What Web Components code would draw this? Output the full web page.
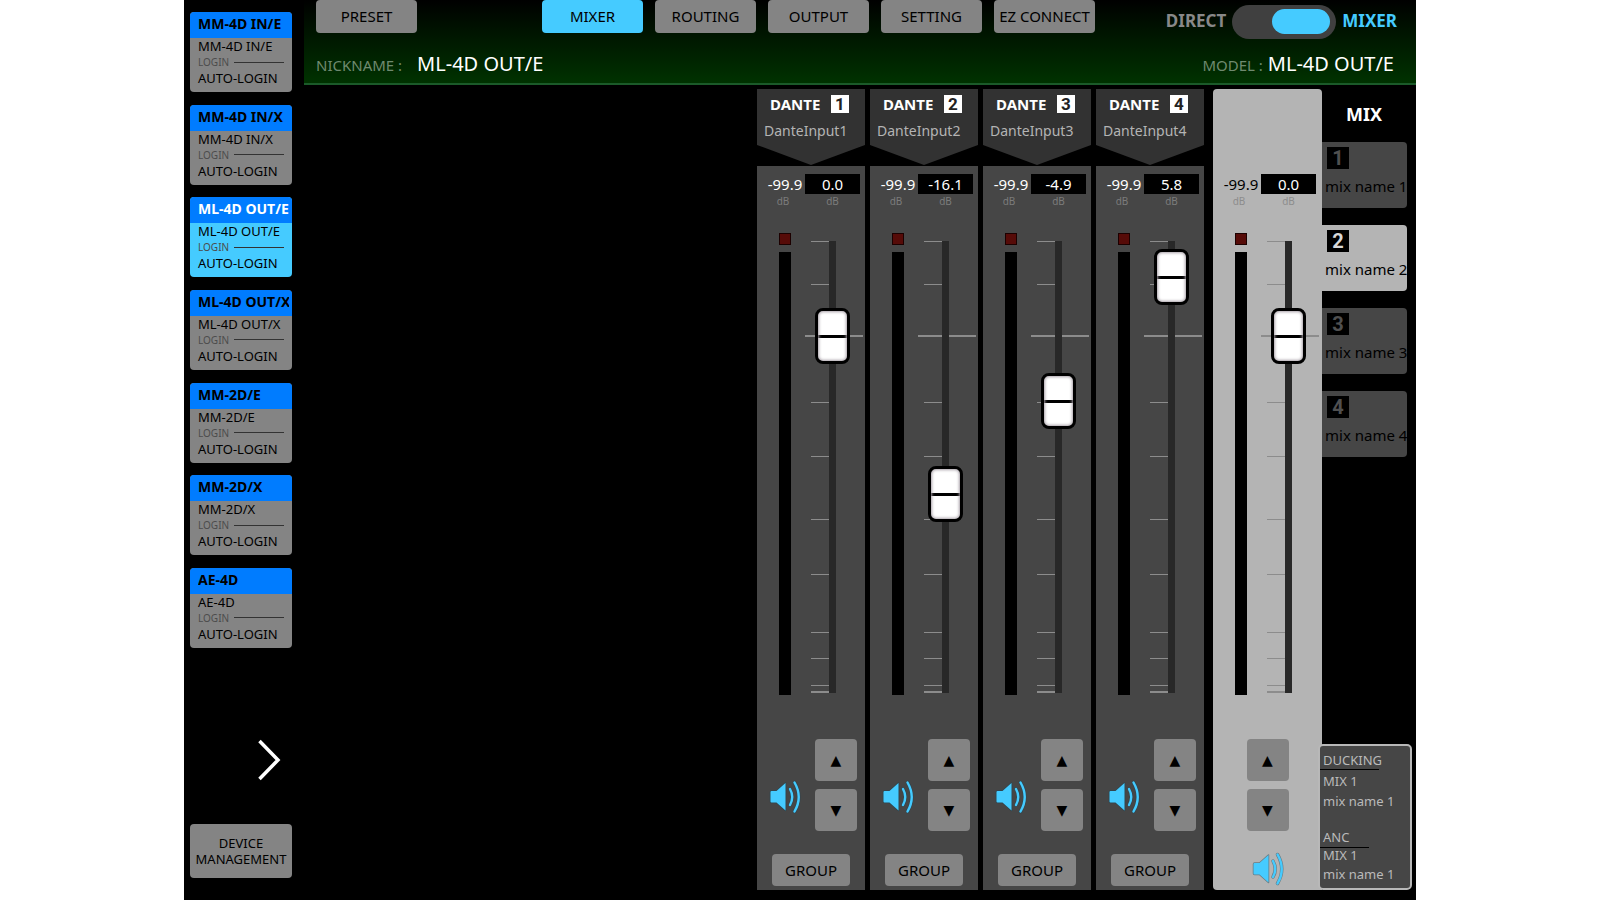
<!DOCTYPE html>
<html lang="en">
<head>
<meta charset="utf-8">
<meta name="viewport" content="width=device-width, initial-scale=1">
<title>ML-4D OUT/E – Mixer</title>
<style>
  body { margin: 0; background: #fff; font-family: "Noto Sans", "Open Sans", sans-serif; }
</style>
</head>
<body>
<mixer-app></mixer-app>

<script>
const BUTTON = `
  button { font: inherit; color: #000; background: #848484; border: 0; border-radius: 4px;
           padding: 0; cursor: pointer; white-space: nowrap; }
  button:focus-visible, input:focus-visible { outline: 2px solid #fff; }
`;

class BaseElement extends HTMLElement {
  connectedCallback() {
    if (this.shadowRoot) return;
    const template = document.createElement('template');
    template.innerHTML = this.render();
    this.attachShadow({ mode: 'open' }).append(template.content.cloneNode(true));
  }
  attr(name) { return this.getAttribute(name) || ''; }
  render() { return ''; }
}

/* Device tile in the side list */
class DeviceCard extends BaseElement {
  render() {
    return `
    <style>
      :host { display: block; }
      ${BUTTON}
      button { display: block; width: 100%; height: 80px; overflow: hidden; text-align: left; }
      .title { display: block; height: 26px; padding: 0 3px 0 8px; background: #007cff; }
      .title b { display: block; font-size: 14px; line-height: 24px; overflow: hidden; }
      .body { display: flex; flex-direction: column; gap: 2px; height: 54px; padding: 0 8px;
              font-size: 13px; line-height: 16px; }
      .login { display: flex; align-items: center; gap: 5px; font-size: 10px; line-height: 12px; color: #4c4c4c; }
      .login i { flex: 1; height: 1px; background: #333; }
      :host([selected]) button { background: #45cbff; }
      :host([selected]) .title { color: #fff; }
    </style>
    <button type="button">
      <span class="title"><b>${this.attr('name')}</b></span>
      <span class="body">
        <span>${this.attr('name')}</span>
        <span class="login">LOGIN <i></i></span>
        <span>AUTO-LOGIN</span>
      </span>
    </button>`;
  }
}
customElements.define('device-card', DeviceCard);

class DeviceSidebar extends BaseElement {
  render() {
    return `
    <style>
      :host { display: flex; flex-direction: column; box-sizing: border-box; width: 120px;
              padding: 12px 12px 22px 6px; }
      ${BUTTON}
      nav { display: flex; flex-direction: column; justify-content: space-between; height: 636px; }
      .next { margin: auto 10px 42px auto; width: 26px; height: 44px; background: none; }
      svg { display: block; }
      .manage { height: 54px; font-size: 13px; line-height: 16px; }
    </style>
    <nav aria-label="Devices"><slot></slot></nav>
    <button class="next" type="button" aria-label="Next page">
      <svg width="26" height="44" viewBox="0 0 26 44" fill="none" stroke="#fff" stroke-width="3.500"><path d="M3.500 3L22 22 3.500 41"/></svg>
    </button>
    <button class="manage" type="button">DEVICE<br>MANAGEMENT</button>`;
  }
}
customElements.define('device-sidebar', DeviceSidebar);

class TabButton extends BaseElement {
  render() {
    return `
    <style>
      :host { display: block; }
      ${BUTTON}
      button { width: 100%; height: 33px; font-size: 15px; line-height: 21px; }
      :host([selected]) button { background: #45cbff; }
    </style>
    <button type="button"><slot></slot></button>`;
  }
}
customElements.define('tab-button', TabButton);

/* DIRECT / MIXER switch */
class ModeSwitch extends BaseElement {
  render() {
    return `
    <style>
      :host { display: block; font-size: 17px; font-weight: 700; line-height: 20px; color: #888; }
      label { display: flex; align-items: center; gap: 6px; }
      span { padding-bottom: 3px; }
      .on { color: #45cbff; }
      input { appearance: none; display: flex; justify-content: flex-start; box-sizing: border-box; margin: 0;
              width: 104px; height: 34px; padding: 4px 6px; border-radius: 17px; background: #404040; }
      input::before { content: ""; width: 58px; height: 25px; border-radius: 13px; background: #888; }
      input:checked { justify-content: flex-end; }
      input:checked::before { background: #45cbff; }
    </style>
    <label><span>DIRECT</span><input type="checkbox" role="switch" checked><span class="on">MIXER</span></label>`;
  }
}
customElements.define('mode-switch', ModeSwitch);

class AppHeader extends BaseElement {
  render() {
    return `
    <style>
      :host { display: block; border-bottom: 2px solid #1b5a29; padding: 0 19px 4px 12px;
              background: linear-gradient(#000, #001500 40%, #003200); }
      .top { display: flex; align-items: flex-start; justify-content: space-between; height: 50px; }
      nav { display: grid; grid-template-columns: repeat(7, 101px); gap: 12px; }
      tab-button:nth-child(2) { grid-column: 3; }
      mode-switch { margin-top: 5px; }
      .names { display: flex; justify-content: space-between; padding-right: 3px; line-height: 28px; }
      .names div { display: flex; align-items: baseline; gap: 5px; }
      .names .nick { gap: 15px; }
      .names span { font-size: 15px; color: #6f8a6f; }
      .names output { font-size: 20px; color: #fff; }
    </style>
    <div class="top">
      <nav aria-label="Pages">
        <tab-button>PRESET</tab-button>
        <tab-button selected>MIXER</tab-button>
        <tab-button>ROUTING</tab-button>
        <tab-button>OUTPUT</tab-button>
        <tab-button>SETTING</tab-button>
        <tab-button>EZ CONNECT</tab-button>
      </nav>
      <mode-switch></mode-switch>
    </div>
    <div class="names">
      <div class="nick"><span>NICKNAME :</span><output>${this.attr('nickname')}</output></div>
      <div><span>MODEL :</span><output>${this.attr('model')}</output></div>
    </div>`;
  }
}
customElements.define('app-header', AppHeader);

/* Level meter, gain scale and fader knob */
class LevelFader extends BaseElement {
  render() {
    const ticks = [0, 43, 161, 215, 278, 333, 391, 417, 444]
      .map(y => `<rect x="6" y="${y}" width="18" height="1"/>`).join('');
    return `
    <style>
      :host { display: block; }
      .grid { display: grid; grid-template-columns: 40px 55px; padding: 0 5px 0 8px; justify-items: center; }
      .peak { font-size: 15px; line-height: 20px; color: var(--level-color, #fff); }
      .gain { justify-self: stretch; text-align: center; font-size: 15px; line-height: 20px; background: #000; color: #fff; }
      small { font-size: 10px; line-height: 14px; color: var(--unit-color, #7c7c7c); }
      .peak-unit { padding-right: 4px; }
      .travel { margin-top: 5px; }
      .meter { display: grid; grid-template-rows: 12px 443px; gap: 7px; width: 12px; margin: 20px 1px 0 0; align-self: start; }
      .led { box-sizing: border-box; border: 1px solid #1c0000; background: #560b08; }
      .bar { background: #000; }
      .fader { display: grid; justify-self: stretch; align-items: center; }
      .fader > * { grid-area: 1 / 1; }
      svg { display: block; overflow: visible; }
      input { appearance: none; writing-mode: vertical-lr; direction: rtl; justify-self: center;
              width: 35px; height: 508px; margin: 0 3px 0 0; background: none; }
      input::-webkit-slider-runnable-track { background: none; }
      input::-webkit-slider-thumb {
        appearance: none; box-sizing: border-box; width: 35px; height: 56px; border: 3px solid #000; border-radius: 8px;
        background: linear-gradient(transparent 24px, #000 24px, #000 27px, transparent 27px), #fff;
        box-shadow: inset 0 0 3px 1px #a8a0a8; }
    </style>
    <div class="grid">
      <output class="peak">-99.9</output><output class="gain">${this.attr('gain')}</output>
      <small class="peak-unit">dB</small><small>dB</small>
    </div>
    <div class="grid travel">
      <div class="meter"><div class="led"></div><div class="bar"></div></div>
      <div class="fader">
        <svg width="58" height="452" viewBox="0 0 58 452" fill="#8c8c8c" shape-rendering="crispEdges" aria-hidden="true">
          ${ticks}
          <rect x="6" y="450" width="18" height="2"/>
          <rect x="0" y="94" width="58" height="2"/>
          <rect x="24" y="0" width="7" height="452" fill="#282828"/>
        </svg>
        <input type="range" min="0" max="452" value="${this.attr('travel')}" aria-label="${this.attr('label')} level">
      </div>
    </div>`;
  }
}
customElements.define('level-fader', LevelFader);

class NudgeButtons extends BaseElement {
  render() {
    return `
    <style>
      :host { display: grid; gap: 8px; width: 42px; }
      ${BUTTON}
      button { height: 42px; font: 14px/20px "DejaVu Sans", sans-serif; }
    </style>
    <button type="button" aria-label="Level up">▲</button>
    <button type="button" aria-label="Level down">▼</button>`;
  }
}
customElements.define('nudge-buttons', NudgeButtons);

class SpeakerToggle extends BaseElement {
  render() {
    return `
    <style>
      :host { display: block; }
      button { display: block; padding: 0; border: 0; background: none; cursor: pointer; }
      svg { display: block; overflow: visible; }
      .edge { stroke: var(--speaker-edge, #2f4650); }
    </style>
    <button type="button" aria-label="Mute" aria-pressed="false">
      <svg width="30" height="32" viewBox="0 0 30 32">
        <g class="edge" fill="none" stroke-linecap="round" stroke-linejoin="round">
          <path stroke-width="1.500" d="M.5 11Q.5 10 1.500 10H6.500L15.500 2V29.500L6.500 21.500H1.500Q.5 21.500.5 20.500Z"/>
          <path stroke-width="3.500" d="M20 8Q24.500 16 20 24M24.500 1.500Q33 16 24.500 30.500"/>
        </g>
        <path fill="#45cbff" d="M.5 11Q.5 10 1.500 10H6.500L15.500 2V29.500L6.500 21.500H1.500Q.5 21.500.5 20.500Z"/>
        <path fill="none" stroke="#45cbff" stroke-width="2.400" stroke-linecap="round" d="M20 8Q24.500 16 20 24M24.500 1.500Q33 16 24.500 30.500"/>
      </svg>
    </button>`;
  }
}
customElements.define('speaker-toggle', SpeakerToggle);

class ChannelStrip extends BaseElement {
  render() {
    const n = this.attr('number');
    return `
    <style>
      :host { display: flex; flex-direction: column; gap: 1px; width: 108px; }
      ${BUTTON}
      header { box-sizing: border-box; height: 76px; padding-top: 6px; background: #323232; color: #fff;
               clip-path: polygon(0 0, 100% 0, 100% 56px, 50% 100%, 0 56px); }
      .source { display: flex; justify-content: space-between; padding: 0 16px 0 13px;
                font-size: 15px; font-weight: 700; line-height: 18px; }
      .source b { width: 18px; height: 18px; text-align: center; background: #fff; color: #222;
                  font: 700 17px/18px Roboto, sans-serif; }
      .name { margin-top: 8px; padding-left: 7px; font-size: 14px; line-height: 20px; color: #b4b4b4; }
      section { padding: 8px 0 4px; background: #464646; }
      .controls { display: flex; justify-content: space-between; align-items: flex-end; padding: 0 8px 0 13px; margin-top: 18px; }
      speaker-toggle { margin-bottom: 18px; }
      .group { display: block; width: 78px; height: 32px; margin: 23px auto 0; font-size: 15px; line-height: 20px; }
    </style>
    <header>
      <div class="source">DANTE <b>${n}</b></div>
      <div class="name">DanteInput${n}</div>
    </header>
    <section>
      <level-fader gain="${this.attr('gain')}" travel="${this.attr('travel')}" label="Dante ${n}"></level-fader>
      <div class="controls"><speaker-toggle></speaker-toggle><nudge-buttons></nudge-buttons></div>
      <button class="group" type="button">GROUP</button>
    </section>`;
  }
}
customElements.define('channel-strip', ChannelStrip);

class MasterStrip extends BaseElement {
  render() {
    return `
    <style>
      :host { display: flex; flex-direction: column; align-items: center; box-sizing: border-box; width: 109px; margin-left: 4px;
              padding-top: 85px; background: #b4b4b4; border-radius: 4px 4px 0 4px;
              --level-color: #000; --unit-color: #8c8c8c; --speaker-edge: #6a7a80; }
      level-fader { align-self: stretch; }
      nudge-buttons { margin-top: 18px; }
      speaker-toggle { margin-top: 22px; }
    </style>
    <level-fader gain="0.0" travel="357" label="Mix"></level-fader>
    <nudge-buttons></nudge-buttons>
    <speaker-toggle></speaker-toggle>`;
  }
}
customElements.define('master-strip', MasterStrip);

class MixTab extends BaseElement {
  render() {
    const n = this.attr('number');
    return `
    <style>
      :host { display: block; }
      ${BUTTON}
      button { display: block; width: 100%; height: 66px; padding-bottom: 5px; overflow: hidden; text-align: left;
               border-radius: 0 4px 4px 0; background: #464646; }
      b { display: block; width: 22px; height: 22px; margin: 0 0 5px 5px; text-align: center; background: #000; color: #505050;
          font: 700 20px/22px Roboto, sans-serif; }
      span { display: block; padding-left: 3px; font-size: 15px; line-height: 24px; }
      :host([selected]) button { background: #b4b4b4; }
      :host([selected]) b { color: #d8d8d8; }
    </style>
    <button type="button"><b>${n}</b><span>mix name ${n}</span></button>`;
  }
}
customElements.define('mix-tab', MixTab);

class AssignPanel extends BaseElement {
  render() {
    return `
    <style>
      :host { display: block; box-sizing: border-box; height: 146px; border: 2px solid #b8b8b8; border-radius: 5px;
              background: #464646; color: #bababa; font-size: 13px; }
      h3, p { margin: 0; padding-left: 3px; font-size: 13px; font-weight: 400; }
      h3 { border-bottom: 1px solid #000; }
      .duck { width: 56px; padding-top: 6px; line-height: 17px; }
      .duck ~ p { line-height: 20px; }
      .duck + p { margin-top: 1px; }
      .anc { width: 46px; margin-top: 16px; line-height: 20px; }
      .anc ~ p { line-height: 19px; }
      .anc + p { margin-top: -2px; }
    </style>
    <h3 class="duck">DUCKING</h3>
    <p>MIX 1</p>
    <p>mix name 1</p>
    <h3 class="anc">ANC</h3>
    <p>MIX 1</p>
    <p>mix name 1</p>`;
  }
}
customElements.define('assign-panel', AssignPanel);

class MixPanel extends BaseElement {
  render() {
    return `
    <style>
      :host { display: flex; flex-direction: column; width: 90px; }
      h2 { margin: 13px 6px 16px 0; text-align: center; font-size: 18px; line-height: 24px; color: #fff; }
      nav { display: grid; gap: 17px; margin-right: 6px; }
      assign-panel { margin: auto 0 0 -4px; }
    </style>
    <h2>MIX</h2>
    <nav aria-label="Mixes">
      <mix-tab number="1"></mix-tab>
      <mix-tab number="2" selected></mix-tab>
      <mix-tab number="3"></mix-tab>
      <mix-tab number="4"></mix-tab>
    </nav>
    <assign-panel></assign-panel>`;
  }
}
customElements.define('mix-panel', MixPanel);

class MixerApp extends BaseElement {
  render() {
    const devices = ['MM-4D IN/E', 'MM-4D IN/X', 'ML-4D OUT/E', 'ML-4D OUT/X', 'MM-2D/E', 'MM-2D/X', 'AE-4D'];
    return `
    <style>
      :host { display: flex; width: 77%; min-height: 100vh; margin: 0 auto; background: #000; }
      .page { flex: 1; min-width: 0; }
      .desk { display: flex; justify-content: flex-end; padding: 4px 4px 10px 0; }
      .strips { display: flex; gap: 5px; margin-right: 5px; }
    </style>
    <device-sidebar>
      ${devices.map(d => `<device-card name="${d}"${d === 'ML-4D OUT/E' ? ' selected' : ''}></device-card>`).join('')}
    </device-sidebar>
    <div class="page">
      <app-header nickname="ML-4D OUT/E" model="ML-4D OUT/E"></app-header>
      <main class="desk">
        <div class="strips">
          <channel-strip number="1" gain="0.0" travel="357"></channel-strip>
          <channel-strip number="2" gain="-16.1" travel="199"></channel-strip>
          <channel-strip number="3" gain="-4.9" travel="292"></channel-strip>
          <channel-strip number="4" gain="5.8" travel="416"></channel-strip>
        </div>
        <master-strip></master-strip>
        <mix-panel></mix-panel>
      </main>
    </div>`;
  }
}
customElements.define('mixer-app', MixerApp);
</script>
</body>
</html>
